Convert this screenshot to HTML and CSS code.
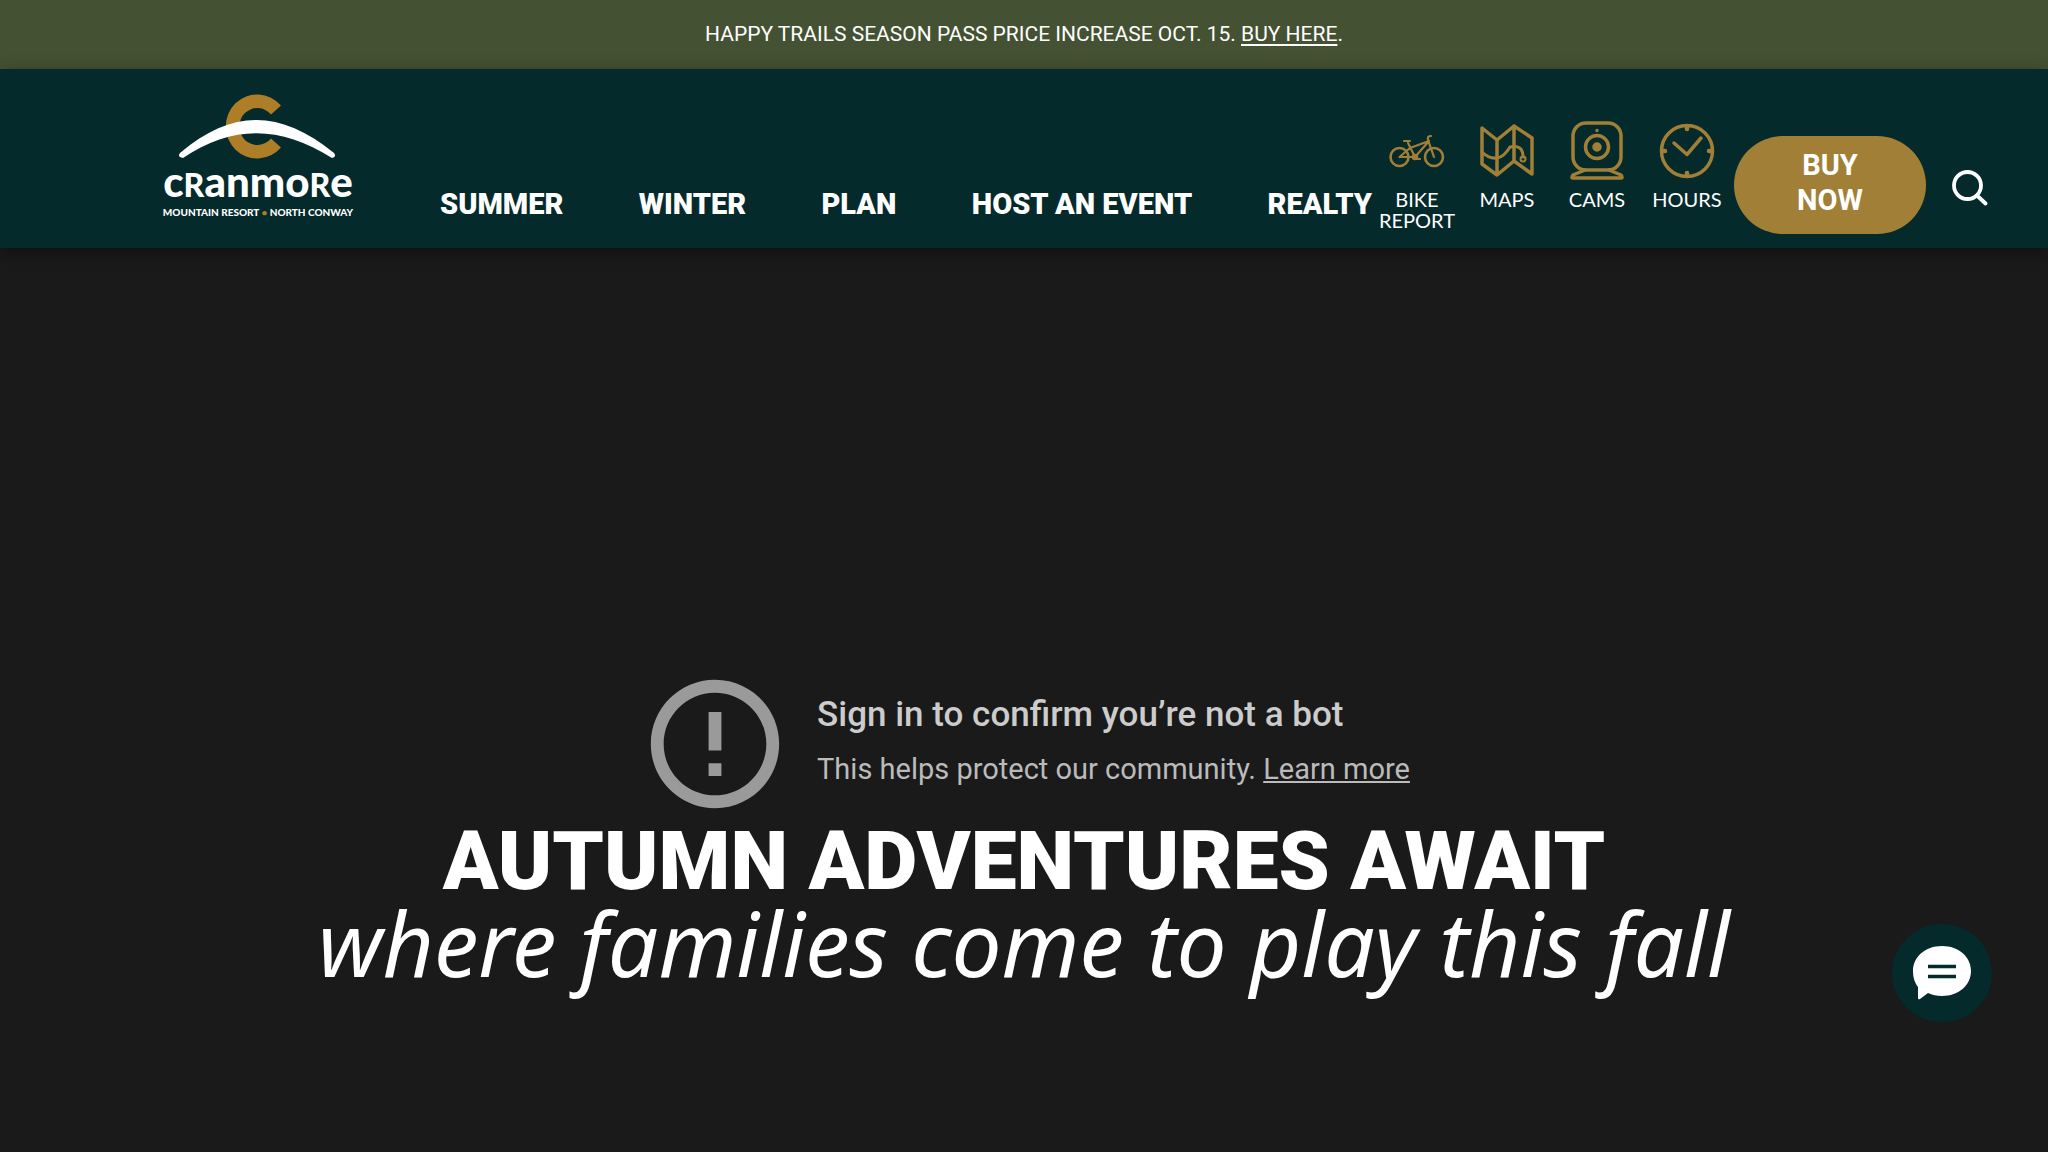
FILE: index.html
```html
<!DOCTYPE html>
<html lang="en">
<head>
<meta charset="utf-8">
<meta name="viewport" content="width=device-width, initial-scale=1">
<title>Cranmore Mountain Resort</title>
<link rel="stylesheet" href="styles.css">
</head>
<body>
<div class="banner">
  <p class="banner-text">HAPPY TRAILS SEASON PASS PRICE INCREASE OCT. 15. <a href="#">BUY HERE</a>.</p>
</div>
<header class="header">
  <a class="logo" href="#">
    <svg class="logo-mark" viewBox="0 0 192 66" aria-hidden="true">
      <path d="M119 11.500 A31.500 32 0 1 0 119 53.500 L109 44.500 A18 18.500 0 1 1 109 20.500 Z" fill="#ad7d28"/>
      <path d="M18 59 C70 15 118 15 172 59 Q175 63 170 64 C118 31 70 31 21 64 Q15 63 18 59Z" fill="#fff"/>
    </svg>
    <span class="logo-name">c<span class="logo-cap">R</span>anmo<span class="logo-cap">R</span>e</span>
    <span class="logo-tag">MOUNTAIN RESORT <span class="logo-dot">•</span> NORTH CONWAY</span>
  </a>
  <nav class="nav">
    <a href="#">SUMMER</a>
    <a href="#">WINTER</a>
    <a href="#">PLAN</a>
    <a href="#">HOST AN EVENT</a>
    <a href="#">REALTY</a>
  </nav>
  <nav class="quick" aria-label="Quick links">
    <a href="#">
      <svg viewBox="0 0 60 60" fill="none" stroke="#a27f37" stroke-width="2.600" stroke-linecap="round" stroke-linejoin="round">
        <circle cx="12.500" cy="36" r="9"/><circle cx="47" cy="36" r="9"/>
        <path d="M12.500 36L23 27L42 20M12.500 36H28L42 20M21 22L28 36M17 20H23M47 36L41 19Q40 15 44 15M33 38H28" stroke-width="2.200"/>
        <circle cx="28" cy="36" r="2" fill="#a27f37"/>
      </svg>
      <span>BIKE REPORT</span>
    </a>
    <a href="#">
      <svg viewBox="0 0 60 60" fill="none" stroke="#a27f37" stroke-width="3.500" stroke-linecap="round" stroke-linejoin="round">
        <path d="M5 7L20 19L37 5L55 17V53L37 40L20 54L5 43ZM20 19V54M37 5V40"/>
        <path d="M5 31Q12 38 20 37Q27 36 33 26Q46 23 46 36" stroke-width="3"/><circle cx="46" cy="38" r="2.500" stroke-width="2"/>
      </svg>
      <span>MAPS</span>
    </a>
    <a href="#">
      <svg viewBox="0 0 60 60" fill="none" stroke="#a27f37" stroke-width="3.500" stroke-linecap="round" stroke-linejoin="round">
        <rect x="6" y="2" width="48" height="47" rx="13"/><circle cx="30" cy="26" r="11.500"/><circle cx="30" cy="26" r="3" fill="#a27f37"/>
        <circle cx="30" cy="9.500" r="1" stroke-width="1.500"/>
        <path d="M18 49L6 54Q4 57 6 57H54Q56 57 54 54L42 49"/>
      </svg>
      <span>CAMS</span>
    </a>
    <a href="#">
      <svg viewBox="0 0 60 60" fill="none" stroke="#a27f37" stroke-width="3.500" stroke-linecap="round" stroke-linejoin="round">
        <circle cx="30" cy="30" r="25.500"/>
        <path d="M17 22L30 33.500L44 17"/><path d="M30 6V8M30 52V54M6 30H8M52 30H54" stroke-width="4.500"/>
      </svg>
      <span>HOURS</span>
    </a>
  </nav>
  <a class="buy" href="#">BUY NOW</a>
  <button class="search" type="button" aria-label="Search">
    <svg viewBox="0 0 36 36" fill="none" stroke="#fff" stroke-width="3.800" stroke-linecap="round"><circle cx="15.500" cy="15.500" r="13.500"/><path d="M25 25.500L33.500 33.500"/></svg>
  </button>
</header>
<main class="hero">
  <section class="notice">
    <svg class="notice-icon" viewBox="0 0 24 24" fill="#9a9a9a" aria-hidden="true"><path d="M11 15h2v2h-2zm0-8h2v6h-2zm.99-5C6.470 2 2 6.480 2 12s4.470 10 9.990 10C17.520 22 22 17.520 22 12S17.520 2 11.990 2zM12 20c-4.420 0-8-3.580-8-8s3.580-8 8-8 8 3.580 8 8-3.580 8-8 8z"/></svg>
    <div>
      <p class="notice-title">Sign in to confirm you’re not a bot</p>
      <p class="notice-text">This helps protect our community. <a href="#">Learn more</a></p>
    </div>
  </section>
  <h1 class="headline">AUTUMN ADVENTURES AWAIT <em>where families come to play this fall</em></h1>
</main>
<button class="chat" type="button" aria-label="Open chat">
  <svg viewBox="0 0 60 56"><path d="M30 1C13 1 1 12 1 26C1 33 3 38 6 42V53Q6 55 8 54L16 48Q22 51 30 51C47 51 59 40 59 26S47 1 30 1Z" fill="#fff"/><path d="M16 21.500H44M16 31.500H44" stroke="#042a2b" stroke-width="3.500"/></svg>
</button>
</body>
</html>
```
FILE: styles.css
```css
* { box-sizing: border-box; }
body {
  margin: 0;
  min-height: 100vh;
  display: flex;
  flex-direction: column;
  background: #1a1a1a;
  color: #fff;
  font-family: Lato, sans-serif;
}
p, h1 { margin: 0; }
a { color: inherit; }
svg { display: block; }
button { border: 0; padding: 0; cursor: pointer; }

.banner { background: #445233; padding: 20px; text-align: center; }
.banner-text { font-family: Roboto, sans-serif; font-size: 21px; line-height: 29px; }
.banner-text a { text-underline-offset: 3px; }

.header {
  position: relative;
  display: flex;
  align-items: flex-start;
  min-height: 179px;
  padding: 25px 60px 0 162px;
  background: #042a2b;
  box-shadow: 0 4px 16px rgba(0, 0, 0, .4);
}
.header a { text-decoration: none; }
.logo { flex: none; width: 192px; display: flex; flex-direction: column; align-items: center; }
.logo-mark { width: 192px; }
.logo-name { font-size: 42px; line-height: 42px; font-weight: 900; }
.logo-cap { font-size: 32px; }
.logo-tag { font-size: 10px; line-height: 12px; font-weight: 900; white-space: nowrap; }
.logo-dot { color: #ad7d28; }

.nav {
  flex: 1;
  display: flex;
  justify-content: space-between;
  padding: 90px 0 0 86px;
  font-family: Roboto, sans-serif;
  font-size: 29px;
  line-height: 40px;
  font-weight: 900;
  white-space: nowrap;
}
.quick { flex: none; display: flex; padding-top: 27px; }
.quick a {
  width: 90px;
  display: flex;
  flex-direction: column;
  align-items: center;
  gap: 8px;
  font-size: 20px;
  line-height: 21px;
  text-align: center;
}
.quick svg { width: 60px; }
.buy {
  flex: none;
  width: 192px;
  margin: 42px 26px 0 2px;
  padding: 12px 56px 16px;
  border-radius: 49px;
  background: #a27f37;
  font-family: Roboto, sans-serif;
  font-size: 29px;
  line-height: 35px;
  font-weight: 700;
  text-align: center;
}
.search { flex: none; margin-top: 76px; background: none; }
.search svg { width: 36px; }

.hero { flex: 1; padding: 419px 24px 0; text-align: center; }
.notice {
  display: flex;
  align-items: flex-start;
  justify-content: center;
  gap: 25px;
  height: 151px;
  color: #bbb;
  font-family: Roboto, sans-serif;
  text-align: left;
}
.notice-icon { width: 154px; }
.notice-title { padding-top: 24px; font-size: 35px; line-height: 48px; font-weight: 500; color: #ccc; }
.notice-text { padding-top: 8px; font-size: 29px; line-height: 44px; }
.headline { font-family: Roboto, sans-serif; font-size: 82px; line-height: 86px; font-weight: 900; }
.headline em {
  display: block;
  font-family: "Noto Sans", sans-serif;
  font-size: 89px;
  line-height: 78px;
  font-weight: 400;
}

.chat {
  position: fixed;
  right: 56px;
  bottom: 130px;
  width: 100px;
  height: 98px;
  display: grid;
  place-items: center;
  border-radius: 50%;
  background: #042a2b;
}
.chat svg { width: 60px; }
```
